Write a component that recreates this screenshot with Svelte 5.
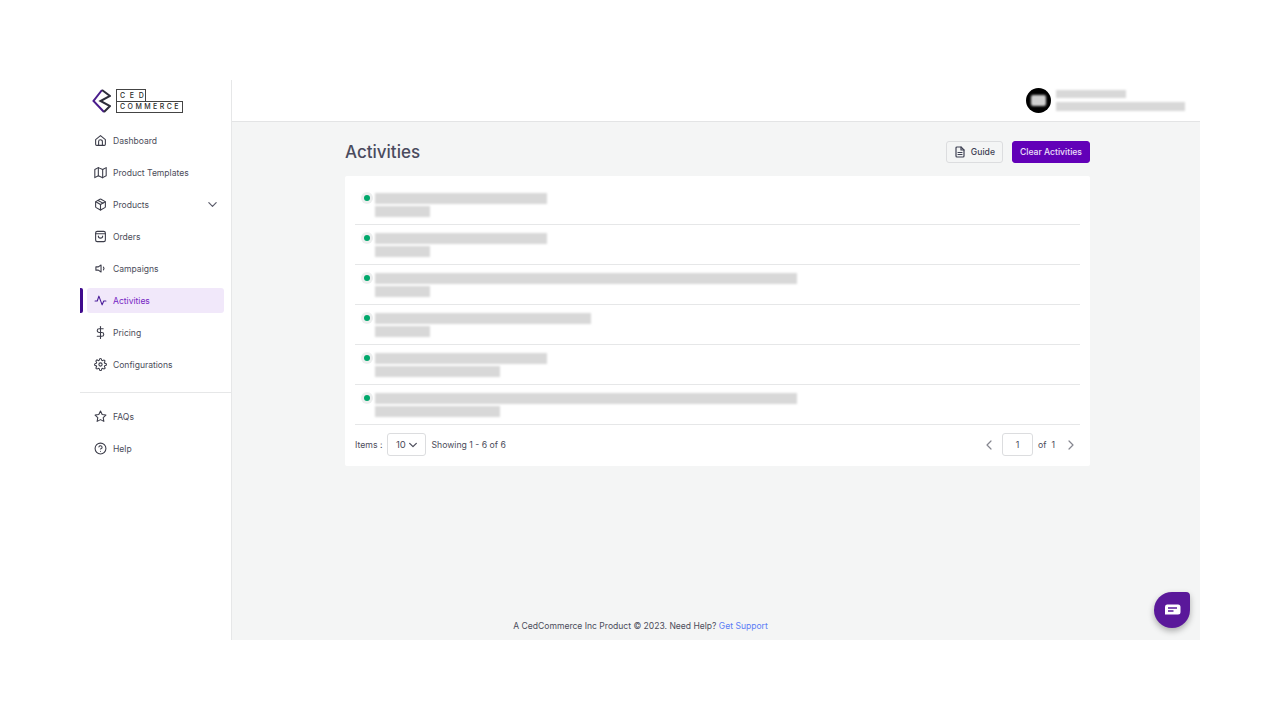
<script>
  const menu = [
    { label: 'Dashboard', icon: 'home' },
    { label: 'Product Templates', icon: 'map' },
    { label: 'Products', icon: 'box', caret: true },
    { label: 'Orders', icon: 'bag' },
    { label: 'Campaigns', icon: 'speaker' },
    { label: 'Activities', icon: 'activity', active: true },
    { label: 'Pricing', icon: 'dollar' },
    { label: 'Configurations', icon: 'gear' }
  ];
  const extras = [
    { label: 'FAQs', icon: 'star' },
    { label: 'Help', icon: 'help' }
  ];
  const rows = [
    { title: 172, sub: 55 },
    { title: 172, sub: 55 },
    { title: 422, sub: 55 },
    { title: 216, sub: 55 },
    { title: 172, sub: 125 },
    { title: 422, sub: 125 }
  ];
</script>

{#snippet icon(name)}
  <svg class="icon" viewBox="0 0 24 24" fill="none" stroke="currentColor" stroke-linecap="round" stroke-linejoin="round">
    {#if name === 'home'}
      <path d="M3 10.500 12 3l9 7.500V19a2 2 0 0 1-2 2H5a2 2 0 0 1-2-2z" /><path d="M8.500 21v-7a3.500 3.500 0 0 1 7 0v7" />
    {:else if name === 'map'}
      <path d="M1.500 6.500 8 3l8 3.500L22.500 3v15L16 21.500 8 18l-6.500 3.500z" /><path d="M8 3v15" /><path d="M16 6.500v15" />
    {:else if name === 'box'}
      <path d="M21 16V8a2 2 0 0 0-1-1.730l-7-4a2 2 0 0 0-2 0l-7 4A2 2 0 0 0 3 8v8a2 2 0 0 0 1 1.730l7 4a2 2 0 0 0 2 0l7-4A2 2 0 0 0 21 16z" /><path d="M3.300 7 12 12l8.700-5" /><path d="M12 22V12" /><path d="M7.500 4.500 16.500 9.500" />
    {:else if name === 'bag'}
      <rect x="3" y="2.500" width="18" height="19" rx="3" /><path d="M3 7h18" /><path d="M8 11a4 4 0 0 0 8 0" />
    {:else if name === 'speaker'}
      <path d="M13 5.500 8 9H3.500v6H8l5 3.500z" /><path d="M17.500 9.500a4 4 0 0 1 0 5" />
    {:else if name === 'activity'}
      <path d="M2 13h4l3-9 6 16 3-7h4" />
    {:else if name === 'dollar'}
      <path d="M12 1v22" /><path d="M17 5H9.500a3.500 3.500 0 0 0 0 7h5a3.500 3.500 0 0 1 0 7H6" />
    {:else if name === 'gear'}
      <circle cx="12" cy="12" r="3" /><path d="M19.400 15a1.650 1.650 0 0 0 .33 1.820l.06.06a2 2 0 1 1-2.830 2.830l-.06-.06a1.650 1.650 0 0 0-2.820 1.170V21a2 2 0 1 1-4 0v-.09A1.650 1.650 0 0 0 7.180 19.730l-.06.06a2 2 0 1 1-2.830-2.830l.06-.06a1.650 1.650 0 0 0-1.170-2.820H3a2 2 0 1 1 0-4h.09A1.650 1.650 0 0 0 4.270 7.180l-.06-.06a2 2 0 1 1 2.830-2.830l.06.06A1.650 1.650 0 0 0 9.920 3.180V3a2 2 0 1 1 4 0v.09a1.650 1.650 0 0 0 2.820 1.170l.06-.06a2 2 0 1 1 2.830 2.830l-.06.06a1.650 1.650 0 0 0 1.170 2.820H21a2 2 0 1 1 0 4h-.09a1.650 1.650 0 0 0-1.510 1z" />
    {:else if name === 'star'}
      <path d="m12 2 3.090 6.260L22 9.270l-5 4.870 1.180 6.880L12 17.770l-6.180 3.250L7 14.140 2 9.270l6.910-1.010z" />
    {:else if name === 'help'}
      <circle cx="12" cy="12" r="10" /><path d="M9.100 9a3 3 0 0 1 5.830 1c0 2-3 3-3 3" /><path d="M12 17h.01" />
    {/if}
  </svg>
{/snippet}

<div class="app">
  <aside class="sidebar">
    <div class="logo">
      <svg class="logo-mark" viewBox="0 0 19 24" fill="none" stroke-width="2">
        <path d="M10 1 1.500 12 12 23" stroke="#4a1d8c" />
        <path d="M10 1l8 6-9.500 5L18 17l-6 6" stroke="#2d2d3a" />
      </svg>
      <div class="logo-text">
        <span class="ced">CED</span>
        <span class="commerce">COMMERCE</span>
      </div>
    </div>

    <nav class="nav">
      {#each menu as item}
        <div class="nav-item" class:active={item.active}>
          {@render icon(item.icon)}
          <span>{item.label}</span>
          {#if item.caret}
            <svg class="caret" viewBox="0 0 12 12" fill="none" stroke="currentColor" stroke-width="1.300" stroke-linecap="round" stroke-linejoin="round"><path d="M2 4l4 4 4-4" /></svg>
          {/if}
        </div>
      {/each}
    </nav>

    <div class="nav nav-extra">
      {#each extras as item}
        <div class="nav-item">
          {@render icon(item.icon)}
          <span>{item.label}</span>
        </div>
      {/each}
    </div>
  </aside>

  <div class="main">
    <header class="topbar">
      <div class="avatar"><span></span></div>
      <div class="user">
        <div class="blur user-name"></div>
        <div class="blur user-mail"></div>
      </div>
    </header>

    <div class="content">
      <div class="page">
        <div class="page-head">
          <h1>Activities</h1>
          <div class="actions">
            <button class="btn">
              <svg viewBox="0 0 24 24" fill="none" stroke="currentColor" stroke-width="2.400" stroke-linejoin="round" stroke-linecap="round"><path d="M14 2H6a2 2 0 0 0-2 2v16a2 2 0 0 0 2 2h12a2 2 0 0 0 2-2V8z" /><path d="M14 2v6h6" /><path d="M8 13h8M8 17h8" /></svg>
              Guide
            </button>
            <button class="btn primary">Clear Activities</button>
          </div>
        </div>

        <div class="card">
          {#each rows as row}
            <div class="row">
              <span class="dot"></span>
              <div class="row-text">
                <div class="blur line" style="width: {row.title}px"></div>
                <div class="blur line" style="width: {row.sub}px"></div>
              </div>
            </div>
          {/each}

          <div class="pager">
            <span>Items :</span>
            <div class="select">
              10
              <svg viewBox="0 0 12 12" fill="none" stroke="currentColor" stroke-width="1.500" stroke-linecap="round" stroke-linejoin="round"><path d="M2 4l4 4 4-4" /></svg>
            </div>
            <span>Showing 1 - 6 of 6</span>
            <div class="pages">
              <svg class="arrow prev" viewBox="0 0 12 12" fill="none" stroke="currentColor" stroke-width="1.200" stroke-linecap="round" stroke-linejoin="round"><path d="M8 2 4 6l4 4" /></svg>
              <div class="page-input">1</div>
              <span>of</span>
              <span>1</span>
              <svg class="arrow next" viewBox="0 0 12 12" fill="none" stroke="currentColor" stroke-width="1.200" stroke-linecap="round" stroke-linejoin="round"><path d="m4 2 4 4-4 4" /></svg>
            </div>
          </div>
        </div>
      </div>

      <footer class="footer">A CedCommerce Inc Product © 2023. Need Help? <a href="#support">Get Support</a></footer>

      <div class="chat">
        <svg viewBox="0 0 17 12" width="17" height="12"><path d="M3 .5h11a2.500 2.500 0 0 1 2.500 2.500v5a2.500 2.500 0 0 1-2.500 2.500H1V3A2.500 2.500 0 0 1 3 .5z" fill="#fff" /><path d="M4 4h9M4 7h5.500" stroke="#5a189a" stroke-width="1.300" /></svg>
      </div>
    </div>
  </div>
</div>

<style>
  :global(body) {
    background: #fff;
    font-family: Inter, "Liberation Sans", sans-serif;
  }

  .app {
    position: relative;
    display: flex;
    width: 1120px;
    height: 560px;
    margin: 80px auto 0;
    color: #4b4c5a;
    font-size: 8.550px;
  }

  .sidebar {
    width: 151px;
    flex-shrink: 0;
    border-right: 1px solid #e6e7e8;
    background: #fff;
  }

  .logo {
    display: flex;
    align-items: center;
    gap: 5px;
    height: 43px;
    padding: 0 0 2px 12px;
    box-sizing: border-box;
  }

  .logo-mark {
    width: 19px;
    height: 24px;
  }

  .logo-text {
    display: flex;
    flex-direction: column;
    align-items: flex-start;
    color: #2a2a2a;
    font-size: 7px;
    font-weight: 500;
  }

  .ced {
    width: 30px;
    height: 12px;
    padding-left: 3px;
    box-sizing: border-box;
    border: 1px solid #444;
    border-bottom: 0;
    line-height: 11px;
    letter-spacing: 4.700px;
  }

  .commerce {
    width: 67px;
    height: 12px;
    padding-left: 3px;
    box-sizing: border-box;
    border: 1px solid #444;
    line-height: 10px;
    letter-spacing: 2.450px;
    white-space: nowrap;
  }

  .nav {
    display: flex;
    flex-direction: column;
    gap: 7px;
    padding-top: 5px;
  }

  .nav-extra {
    margin-top: 15px;
    padding-top: 11px;
    border-top: 1px solid #e6e7e8;
  }

  .nav-item {
    position: relative;
    display: flex;
    align-items: center;
    gap: 6px;
    height: 25px;
    margin: 0 7px;
    padding-left: 7px;
    border-radius: 3px;
  }

  .nav-item.active {
    background: #f1e8fa;
    color: #7626c4;
  }

  .nav-item.active::before {
    content: "";
    position: absolute;
    left: -7px;
    top: 0;
    width: 3px;
    height: 25px;
    background: #3f0a8c;
    border-radius: 0 2px 2px 0;
  }

  .icon {
    width: 13px;
    height: 13px;
    flex-shrink: 0;
    color: #3c3d4a;
    stroke-width: 2;
  }

  .active .icon {
    color: #4b1d9a;
  }

  .caret {
    width: 11px;
    height: 11px;
    margin-left: auto;
    margin-right: 6px;
    color: #5a5b6a;
  }

  .main {
    flex: 1;
    display: flex;
    flex-direction: column;
    min-width: 0;
  }

  .topbar {
    display: flex;
    justify-content: flex-end;
    align-items: center;
    gap: 5px;
    height: 42px;
    padding-right: 15px;
    box-sizing: border-box;
    border-bottom: 1px solid #e3e4e5;
    background: #fff;
    flex-shrink: 0;
  }

  .avatar {
    display: flex;
    align-items: center;
    justify-content: center;
    width: 25px;
    height: 25px;
    border-radius: 50%;
    background: #000;
  }

  .avatar span {
    width: 15px;
    height: 11px;
    background: #cfcfcf;
    border-radius: 2px;
    filter: blur(1px);
  }

  .user {
    display: flex;
    flex-direction: column;
    gap: 4px;
  }

  .blur {
    background: #d8d8d8;
    filter: blur(1.200px);
  }

  .user-name {
    width: 70px;
    height: 8px;
  }

  .user-mail {
    width: 129px;
    height: 9px;
  }

  .content {
    position: relative;
    flex: 1;
    display: flex;
    flex-direction: column;
    background: #f4f5f5;
  }

  .page {
    flex: 1;
    width: 745px;
    margin-left: 113px;
  }

  .page-head {
    display: flex;
    justify-content: space-between;
    align-items: center;
    height: 54px;
    padding-top: 6px;
    box-sizing: border-box;
  }

  h1 {
    margin: 0;
    font-size: 17px;
    font-weight: 500;
    color: #4a4b5e;
  }

  .actions {
    display: flex;
    gap: 9px;
  }

  .btn {
    display: flex;
    align-items: center;
    justify-content: center;
    gap: 5px;
    height: 22px;
    padding: 0 7px;
    box-sizing: border-box;
    border: 1px solid #dcdddf;
    border-radius: 3px;
    background: #f4f5f5;
    color: #3f4254;
    font: 500 8.600px Inter, "Liberation Sans", sans-serif;
  }

  .btn svg {
    width: 12px;
    height: 12px;
  }

  .btn.primary {
    background: #6200b8;
    border-color: #6200b8;
    color: #ede0fa;
  }

  .card {
    padding: 9px 10px 0;
    height: 290px;
    box-sizing: border-box;
    background: #fff;
    border-radius: 2px;
  }

  .row {
    display: flex;
    gap: 5px;
    height: 40px;
    padding: 8px 0 0 9px;
    box-sizing: border-box;
    border-bottom: 1px solid #e6e7e8;
  }

  .dot {
    width: 6px;
    height: 6px;
    margin-top: 2px;
    border-radius: 50%;
    background: #00a86b;
    box-shadow: 0 0 0 3px #eceeee;
    flex-shrink: 0;
  }

  .row-text {
    display: flex;
    flex-direction: column;
    gap: 2px;
  }

  .line {
    height: 11px;
  }

  .pager {
    display: flex;
    align-items: center;
    gap: 5px;
    height: 39px;
    font-size: 8.700px;
  }

  .select {
    display: flex;
    align-items: center;
    justify-content: center;
    gap: 2px;
    width: 39px;
    height: 23px;
    box-sizing: border-box;
    border: 1px solid #dcdddf;
    border-radius: 3px;
    font-size: 9.500px;
  }

  .select svg {
    width: 10px;
    height: 10px;
  }

  .pages {
    display: flex;
    align-items: center;
    gap: 5px;
    margin-left: auto;
    padding-right: 3px;
  }

  .arrow {
    width: 12px;
    height: 12px;
    color: #85868f;
  }

  .prev {
    margin-right: 2px;
  }

  .next {
    margin-left: 5px;
  }

  .page-input {
    display: flex;
    align-items: center;
    justify-content: center;
    width: 31px;
    height: 23px;
    box-sizing: border-box;
    border: 1px solid #dcdddf;
    border-radius: 3px;
  }

  .footer {
    height: 19px;
    padding-right: 151px;
    text-align: center;
    line-height: 10px;
  }

  .footer a {
    color: #5b7cf5;
    text-decoration: none;
  }

  .chat {
    position: absolute;
    right: 10px;
    bottom: 12px;
    display: flex;
    align-items: center;
    justify-content: center;
    width: 36px;
    height: 36px;
    border-radius: 50% 4px 50% 50%;
    background: #5a189a;
    box-shadow: 0 3px 6px rgba(0, 0, 0, 0.3);
  }
</style>
